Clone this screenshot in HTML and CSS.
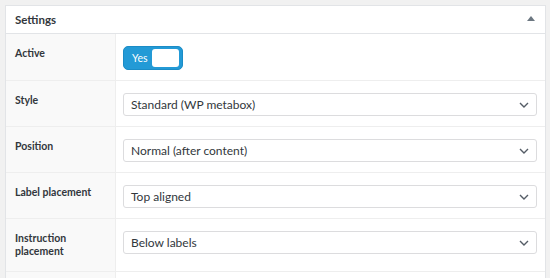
FILE: index.html
```html
<!DOCTYPE html>
<html lang="en">
<head>
    <meta charset="UTF-8">
    <title>Settings</title>
    <link rel="stylesheet" href="styles.css">
</head>
<body>
    <div class="postbox">
        <div class="postbox-header">
            <h2>Settings</h2>
            <span class="toggle-arrow"></span>
        </div>
        <div class="fields">
            <div class="field">
                <div class="field-label">Active</div>
                <div class="field-input">
                    <div class="switch">
                        <span class="switch-text">Yes</span>
                        <span class="switch-knob"></span>
                    </div>
                </div>
            </div>
            <div class="field">
                <div class="field-label">Style</div>
                <div class="field-input">
                    <div class="select">
                        <span>Standard (WP metabox)</span>
                        <svg class="chevron" width="10" height="6" viewBox="0 0 10 6"><path d="M1 1l4 4 4-4" fill="none" stroke="#555d66" stroke-width="1.4"/></svg>
                    </div>
                </div>
            </div>
            <div class="field">
                <div class="field-label">Position</div>
                <div class="field-input">
                    <div class="select">
                        <span>Normal (after content)</span>
                        <svg class="chevron" width="10" height="6" viewBox="0 0 10 6"><path d="M1 1l4 4 4-4" fill="none" stroke="#555d66" stroke-width="1.4"/></svg>
                    </div>
                </div>
            </div>
            <div class="field">
                <div class="field-label">Label placement</div>
                <div class="field-input">
                    <div class="select">
                        <span>Top aligned</span>
                        <svg class="chevron" width="10" height="6" viewBox="0 0 10 6"><path d="M1 1l4 4 4-4" fill="none" stroke="#555d66" stroke-width="1.4"/></svg>
                    </div>
                </div>
            </div>
            <div class="field">
                <div class="field-label">Instruction placement</div>
                <div class="field-input">
                    <div class="select">
                        <span>Below labels</span>
                        <svg class="chevron" width="10" height="6" viewBox="0 0 10 6"><path d="M1 1l4 4 4-4" fill="none" stroke="#555d66" stroke-width="1.4"/></svg>
                    </div>
                </div>
            </div>
            <div class="field">
                <div class="field-label">&nbsp;</div>
                <div class="field-input"></div>
            </div>
        </div>
    </div>
</body>
</html>
```
FILE: styles.css
```css
body {
    margin: 5px 4px 0 5px;
    background: #f1f1f1;
    font-family: Lato, "Noto Sans", sans-serif;
    color: #23282d;
    overflow: hidden;
}
.postbox {
    background: #fff;
    border: 1px solid #e2e4e7;
    height: 300px;
}
.postbox-header {
    display: flex;
    align-items: center;
    justify-content: space-between;
    height: 27px;
    padding: 0 10px 0 9px;
    border-bottom: 1px solid #e2e4e7;
}
.postbox-header h2 {
    margin: 0;
    font-size: 11.5px;
    font-weight: 700;
    color: #32373c;
}
.toggle-arrow {
    width: 0;
    height: 0;
    border-left: 4px solid transparent;
    border-right: 4px solid transparent;
    border-bottom: 5px solid #6c7781;
    margin-top: -2px;
}
.field {
    display: flex;
    border-bottom: 1px solid #eeeeee;
}
.field-label {
    width: 100px;
    flex: none;
    padding: 13px 0 13px 9px;
    background: #f9f9f9;
    border-right: 1px solid #eeeeee;
    font-size: 10.5px;
    font-weight: 700;
    line-height: 13px;
    color: #32373c;
}
.field-input {
    flex: 1;
    padding: 12px 8px 10px 7px;
}
.switch {
    display: flex;
    align-items: center;
    justify-content: space-between;
    box-sizing: border-box;
    width: 60px;
    height: 24px;
    padding: 2px 3px 2px 8px;
    background: #239ad6;
    border: 1px solid #1b8cc6;
    border-radius: 5px;
    color: #fff;
    font-size: 10.5px;
}
.switch-knob {
    width: 27px;
    height: 18px;
    background: #fff;
    border-radius: 3px;
}
.select {
    display: flex;
    align-items: center;
    justify-content: space-between;
    box-sizing: border-box;
    height: 23px;
    padding: 0 7px 0 7px;
    border: 1px solid #dcdcde;
    border-radius: 3px;
    font-size: 12px;
    color: #32373c;
}
```
